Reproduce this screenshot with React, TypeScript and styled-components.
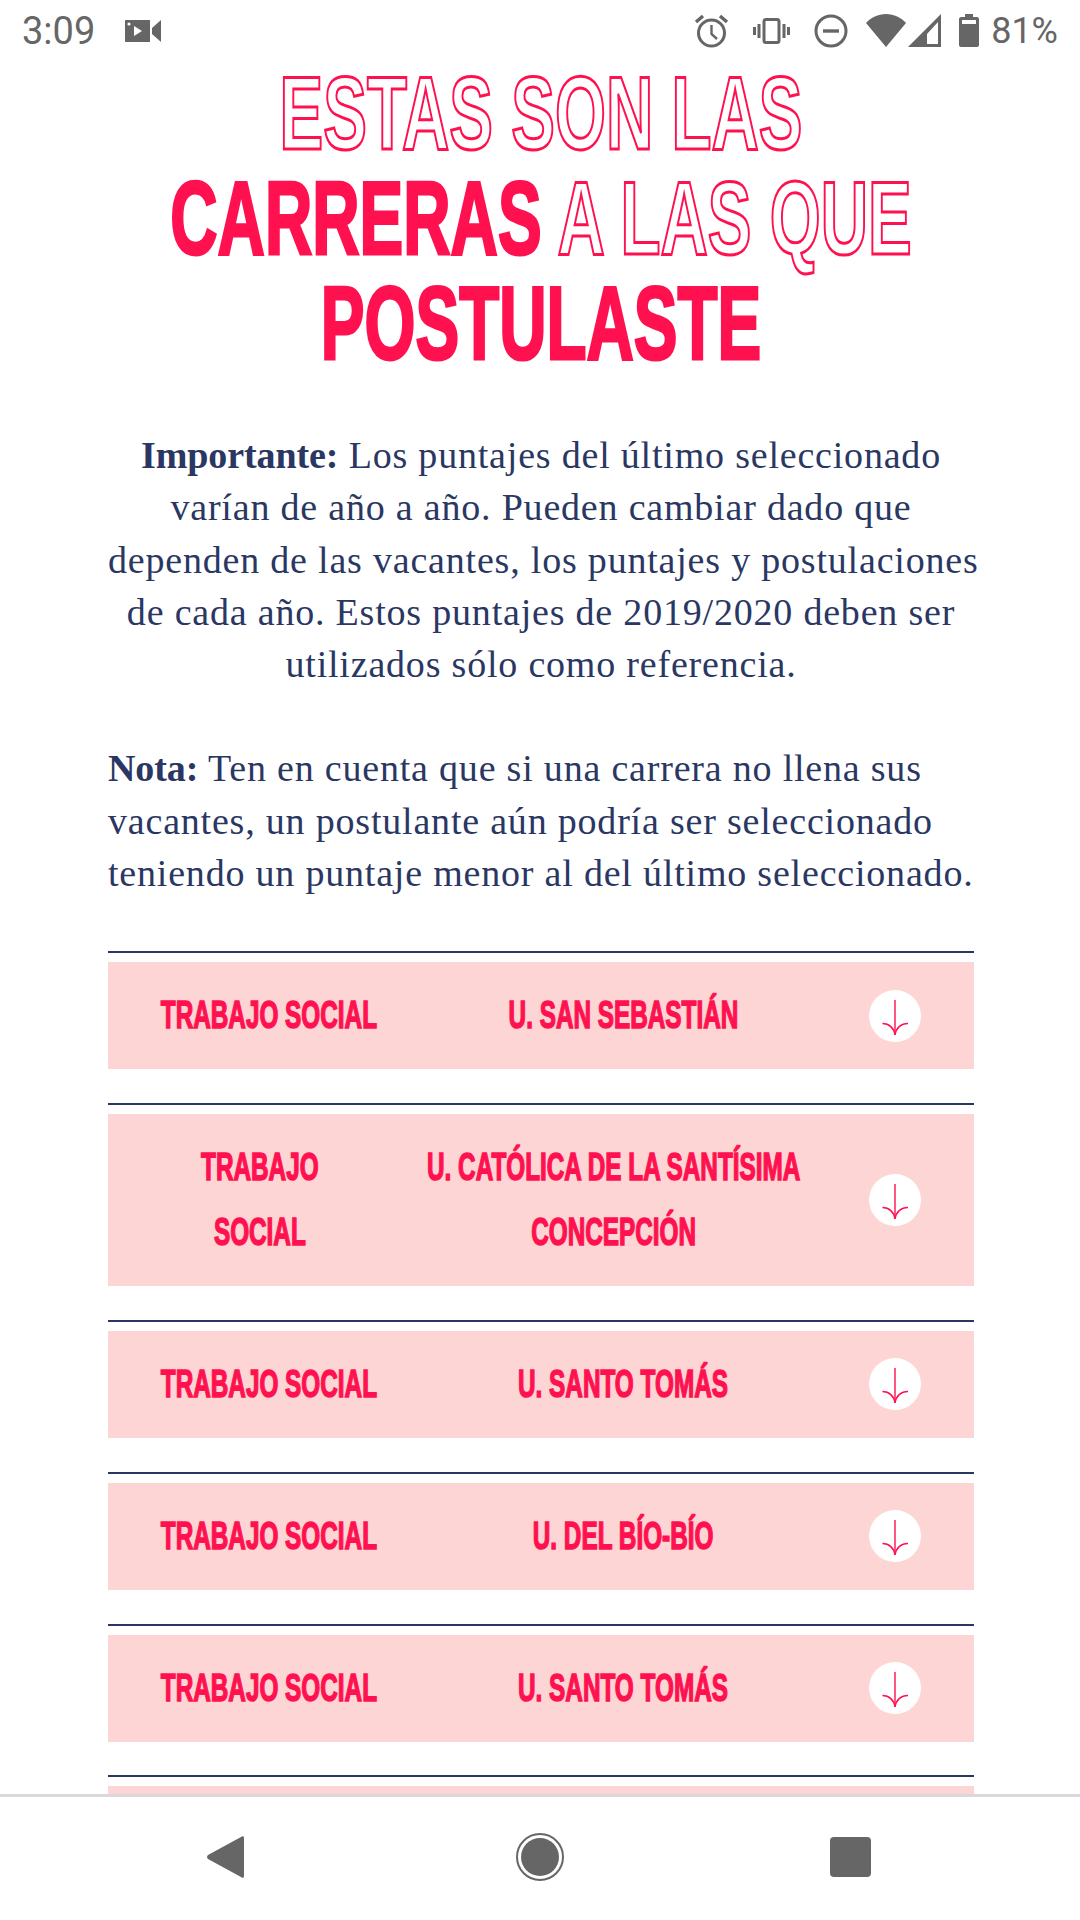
import React from "react";
import styled, { createGlobalStyle } from "styled-components";

const pink = "#ff1150";
const navy = "#2a3763";
const grey = "#666666";

const GlobalStyle = createGlobalStyle`
  html, body {
    margin: 0;
    padding: 0;
    background: #ffffff;
  }
`;

const Screen = styled.div`
  width: 1080px;
  height: 1920px;
  display: flex;
  flex-direction: column;
  overflow: hidden;
  background: #ffffff;
`;

const StatusBar = styled.header`
  height: 61px;
  flex: none;
  display: flex;
  align-items: center;
  justify-content: space-between;
  padding: 0 22px;
  color: ${grey};
  font-family: Roboto, sans-serif;
  font-size: 36px;
`;

const StatusGroup = styled.div<{ $gap: number }>`
  display: flex;
  align-items: center;
  gap: ${({ $gap }) => $gap}px;
`;

const Clock = styled.span`
  font-size: 38px;
`;

const Content = styled.main`
  flex: 1;
  min-height: 0;
  overflow: hidden;
  padding: 0 106px 0 108px;
`;

/* the heading font is a tall condensed display face, squeezed from Liberation Sans */
const Title = styled.h1`
  width: 1380px;
  margin: 0 0 53px -257px;
  font-family: "Liberation Sans", sans-serif;
  font-size: 104px;
  font-weight: 700;
  line-height: 105px;
  text-align: center;
  white-space: nowrap;
  color: ${pink};
  -webkit-text-stroke: 3px ${pink};
  transform: scaleX(0.63);
`;

const TitleLine = styled.span`
  display: block;
`;

const Outlined = styled.span`
  color: #ffffff;
`;

const Note = styled.p<{ $center?: boolean }>`
  margin: 0 0 52px;
  font-family: "Liberation Serif", serif;
  font-size: 38px;
  letter-spacing: 0.8px;
  line-height: 52.3px;
  white-space: nowrap;
  color: ${navy};
  text-align: ${({ $center }) => ($center ? "center" : "left")};
`;

const NoteLabel = styled.strong`
  letter-spacing: -0.1px;
`;

const Career = styled.section`
  border-top: 2px solid ${navy};
  padding-top: 9px;
  margin-bottom: 33.8px;
`;

const CareerCard = styled.div<{ $first: number; $second: number }>`
  display: grid;
  grid-template-columns: ${({ $first, $second }) => `${$first}px ${$second}px 1fr`};
  align-items: center;
  padding: 21px 0;
  background: #fed5d5;
  font-family: "Liberation Sans", sans-serif;
  font-size: 38px;
  font-weight: 700;
  line-height: 65px;
  color: ${pink};
  -webkit-text-stroke: 1.5px ${pink};
`;

const CareerCell = styled.div`
  display: flex;
  justify-content: center;
`;

const CareerText = styled.span`
  flex: none;
  white-space: pre;
  text-align: center;
  transform: scaleX(0.64);
`;

const ArrowButton = styled.div`
  width: 52px;
  height: 52px;
  justify-self: center;
  border-radius: 50%;
  background: #ffffff;

  svg {
    display: block;
  }
`;

const NavBar = styled.nav`
  height: 126px;
  flex: none;
  box-sizing: border-box;
  border-top: 3px solid #d9d9dd;
  display: grid;
  grid-template-columns: 309px 314px 41px;
  align-items: center;
  padding: 0 0 3px 207px;
  background: #ffffff;
`;

const careers = [
  { name: "TRABAJO SOCIAL", uni: "U. SAN SEBASTIÁN", first: 322, second: 386 },
  { name: "TRABAJO\nSOCIAL", uni: "U. CATÓLICA DE LA SANTÍSIMA\nCONCEPCIÓN", first: 304, second: 404 },
  { name: "TRABAJO SOCIAL", uni: "U. SANTO TOMÁS", first: 322, second: 386 },
  { name: "TRABAJO SOCIAL", uni: "U. DEL BÍO-BÍO", first: 322, second: 386 },
  { name: "TRABAJO SOCIAL", uni: "U. SANTO TOMÁS", first: 322, second: 386 },
  { name: "TRABAJO SOCIAL", uni: "U. SANTO TOMÁS", first: 322, second: 386 },
];

const ArrowIcon = () => (
  <svg width="52" height="52" viewBox="0 0 52 52" fill="none" stroke={pink} strokeWidth="1.4">
    <path d="M26 10V45" />
    <path d="M13.5 33.5C20 33.5 25 38 26 45C27 38 32 33.5 39 33.5" />
  </svg>
);

const VideoIcon = () => (
  <svg width="36" height="22" viewBox="0 0 36 22" fill={grey}>
    <path d="M1 0H25V22H1C0.4 22 0 21.6 0 21V1C0 0.4 0.4 0 1 0Z" />
    <path d="M27 8L36 0V22L27 14Z" />
    <path d="M9 6L17 11L9 16Z" fill="#fff" />
    <circle cx="4" cy="4" r="1.6" fill="#fff" />
  </svg>
);

const AlarmIcon = () => (
  <svg width="35" height="34" viewBox="0 0 35 34" fill="none" stroke={grey} strokeWidth="3">
    <circle cx="17.5" cy="19" r="13" />
    <path d="M17.5 11V20L23 25" strokeWidth="2.4" />
    <path d="M2 8L9 2M33 8L26 2" strokeWidth="3.4" />
  </svg>
);

const VibrateIcon = () => (
  <svg width="37" height="26" viewBox="0 0 37 26" fill="none" stroke={grey}>
    <rect x="11" y="1.5" width="15" height="23" rx="2" strokeWidth="3" />
    <path d="M6 6V20M31 6V20" strokeWidth="3" />
    <path d="M1.5 9V17M35.5 9V17" strokeWidth="3" />
  </svg>
);

const DndIcon = () => (
  <svg width="34" height="34" viewBox="0 0 34 34" fill="none" stroke={grey} strokeWidth="3">
    <circle cx="17" cy="17" r="15" />
    <path d="M9 17H25" strokeWidth="3.4" />
  </svg>
);

const WifiIcon = () => (
  <svg width="40" height="33" viewBox="0 0 40 33" fill={grey}>
    <path d="M0 9C5 3.500 12 0 20 0C28 0 35 3.500 40 9L20 33Z" />
  </svg>
);

const SignalIcon = () => (
  <svg width="33" height="33" viewBox="0 0 33 33">
    <path d="M33 0V33H0Z" fill={grey} />
    <path d="M30 8V30H19V20Z" fill="#fff" />
    <path d="M19 20V30H9Z" fill={grey} />
  </svg>
);

const BatteryIcon = () => (
  <svg width="20" height="33" viewBox="0 0 20 33" fill={grey}>
    <path d="M6 0H14V3H18C19 3 20 4 20 5V31C20 32 19 33 18 33H2C1 33 0 32 0 31V5C0 4 1 3 2 3H6Z" />
    <rect x="3" y="6" width="14" height="4" fill="#fff" />
  </svg>
);

const BackIcon = () => (
  <svg width="37" height="42" viewBox="0 0 37 42" fill={grey}>
    <path d="M37 2C37 0 35.500 -0.500 34 1L1 19C-0.300 20 -0.300 22 1 23L34 41C35.500 42.500 37 42 37 40Z" />
  </svg>
);

const HomeIcon = () => (
  <svg width="48" height="48" viewBox="0 0 48 48">
    <circle cx="24" cy="24" r="23" fill="none" stroke={grey} strokeWidth="2" />
    <circle cx="24" cy="24" r="19" fill={grey} />
  </svg>
);

const SquareIcon = () => (
  <svg width="41" height="40" viewBox="0 0 41 40" fill={grey}>
    <rect width="41" height="40" rx="4" />
  </svg>
);

const App: React.FC = () => {
  return (
    <Screen>
      <GlobalStyle />
      <StatusBar>
        <StatusGroup $gap={30}>
          <Clock>3:09</Clock>
          <VideoIcon />
        </StatusGroup>
        <StatusGroup $gap={18}>
          <StatusGroup $gap={24}>
            <AlarmIcon />
            <VibrateIcon />
            <DndIcon />
          </StatusGroup>
          <StatusGroup $gap={2}>
            <WifiIcon />
            <SignalIcon />
          </StatusGroup>
          <StatusGroup $gap={12}>
            <BatteryIcon />
            <span>81%</span>
          </StatusGroup>
        </StatusGroup>
      </StatusBar>

      <Content>
        <Title>
          <TitleLine>
            <Outlined>ESTAS SON LAS</Outlined>
          </TitleLine>
          <TitleLine>
            CARRERAS <Outlined>A LAS QUE</Outlined>
          </TitleLine>
          <TitleLine>POSTULASTE</TitleLine>
        </Title>

        <Note $center>
          <NoteLabel>Importante:</NoteLabel> Los puntajes del último seleccionado
          <br />
          varían de año a año. Pueden cambiar dado que
          <br />
          dependen de las vacantes, los puntajes y postulaciones
          <br />
          de cada año. Estos puntajes de 2019/2020 deben ser
          <br />
          utilizados sólo como referencia.
        </Note>
        <Note>
          <NoteLabel>Nota:</NoteLabel> Ten en cuenta que si una carrera no llena sus
          <br />
          vacantes, un postulante aún podría ser seleccionado
          <br />
          teniendo un puntaje menor al del último seleccionado.
        </Note>

        {careers.map((c, idx) => (
          <Career key={idx}>
            <CareerCard $first={c.first} $second={c.second}>
              <CareerCell>
                <CareerText>{c.name}</CareerText>
              </CareerCell>
              <CareerCell>
                <CareerText>{c.uni}</CareerText>
              </CareerCell>
              <ArrowButton>
                <ArrowIcon />
              </ArrowButton>
            </CareerCard>
          </Career>
        ))}
      </Content>

      <NavBar>
        <BackIcon />
        <HomeIcon />
        <SquareIcon />
      </NavBar>
    </Screen>
  );
};

export default App;
